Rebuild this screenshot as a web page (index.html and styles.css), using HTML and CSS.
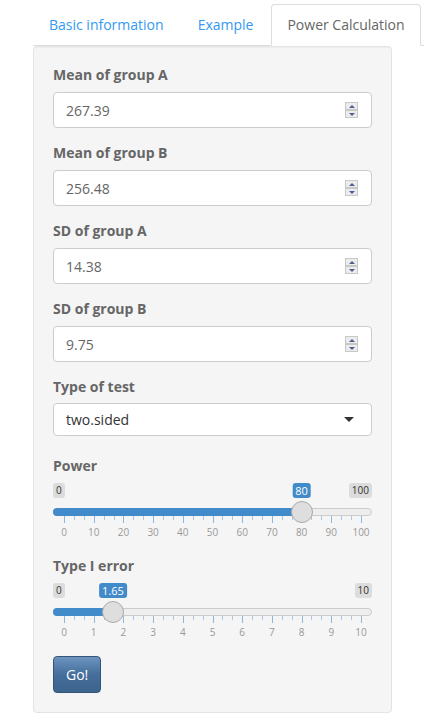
FILE: index.html
```html
<!DOCTYPE html>
<html>
<head>
<meta charset="utf-8">
<link rel="stylesheet" href="styles.css">
</head>
<body>
<div class="page">
  <ul class="tabs">
    <li class="tab"><a class="tab-link">Basic information</a></li>
    <li class="tab"><a class="tab-link">Example</a></li>
    <li class="tab active"><a class="tab-link">Power Calculation</a></li>
  </ul>
  <div class="well">
    <div class="group">
      <label class="label">Mean of group A</label>
      <div class="field"><input class="input" type="text" value="267.39"><span class="spin"><span class="spin-up"></span><span class="spin-down"></span></span></div>
    </div>
    <div class="group">
      <label class="label">Mean of group B</label>
      <div class="field"><input class="input" type="text" value="256.48"><span class="spin"><span class="spin-up"></span><span class="spin-down"></span></span></div>
    </div>
    <div class="group">
      <label class="label">SD of group A</label>
      <div class="field"><input class="input" type="text" value="14.38"><span class="spin"><span class="spin-up"></span><span class="spin-down"></span></span></div>
    </div>
    <div class="group">
      <label class="label">SD of group B</label>
      <div class="field"><input class="input" type="text" value="9.75"><span class="spin"><span class="spin-up"></span><span class="spin-down"></span></span></div>
    </div>
    <div class="group group-select">
      <label class="label">Type of test</label>
      <div class="select"><span class="select-text">two.sided</span><span class="caret"></span></div>
    </div>
    <div class="group">
      <label class="label">Power</label>
      <div class="slider">
        <span class="irs-min">0</span>
        <span class="irs-max">100</span>
        <div class="irs-line"></div>
        <div class="irs-inner">
          <div class="irs-bar" style="width: calc(80% + 11px)"></div>
          <span class="irs-single" style="left: 80%">80</span>
          <span class="irs-handle" style="left: 80%"></span>
          <div class="irs-grid">
            <span class="tick major" style="left:0%"></span><span class="tick" style="left:3.333%"></span><span class="tick" style="left:6.667%"></span>
            <span class="tick major" style="left:10%"></span><span class="tick" style="left:13.333%"></span><span class="tick" style="left:16.667%"></span>
            <span class="tick major" style="left:20%"></span><span class="tick" style="left:23.333%"></span><span class="tick" style="left:26.667%"></span>
            <span class="tick major" style="left:30%"></span><span class="tick" style="left:33.333%"></span><span class="tick" style="left:36.667%"></span>
            <span class="tick major" style="left:40%"></span><span class="tick" style="left:43.333%"></span><span class="tick" style="left:46.667%"></span>
            <span class="tick major" style="left:50%"></span><span class="tick" style="left:53.333%"></span><span class="tick" style="left:56.667%"></span>
            <span class="tick major" style="left:60%"></span><span class="tick" style="left:63.333%"></span><span class="tick" style="left:66.667%"></span>
            <span class="tick major" style="left:70%"></span><span class="tick" style="left:73.333%"></span><span class="tick" style="left:76.667%"></span>
            <span class="tick major" style="left:80%"></span><span class="tick" style="left:83.333%"></span><span class="tick" style="left:86.667%"></span>
            <span class="tick major" style="left:90%"></span><span class="tick" style="left:93.333%"></span><span class="tick" style="left:96.667%"></span>
            <span class="tick major" style="left:100%"></span>
            <span class="tick-text" style="left:0%">0</span>
            <span class="tick-text" style="left:10%">10</span>
            <span class="tick-text" style="left:20%">20</span>
            <span class="tick-text" style="left:30%">30</span>
            <span class="tick-text" style="left:40%">40</span>
            <span class="tick-text" style="left:50%">50</span>
            <span class="tick-text" style="left:60%">60</span>
            <span class="tick-text" style="left:70%">70</span>
            <span class="tick-text" style="left:80%">80</span>
            <span class="tick-text" style="left:90%">90</span>
            <span class="tick-text" style="left:100%">100</span>
          </div>
        </div>
      </div>
    </div>
    <div class="group">
      <label class="label">Type I error</label>
      <div class="slider">
        <span class="irs-min">0</span>
        <span class="irs-max">10</span>
        <div class="irs-line"></div>
        <div class="irs-inner">
          <div class="irs-bar" style="width: calc(16.5% + 11px)"></div>
          <span class="irs-single" style="left: 16.5%">1.65</span>
          <span class="irs-handle" style="left: 16.5%"></span>
          <div class="irs-grid">
            <span class="tick major" style="left:0%"></span><span class="tick" style="left:3.333%"></span><span class="tick" style="left:6.667%"></span>
            <span class="tick major" style="left:10%"></span><span class="tick" style="left:13.333%"></span><span class="tick" style="left:16.667%"></span>
            <span class="tick major" style="left:20%"></span><span class="tick" style="left:23.333%"></span><span class="tick" style="left:26.667%"></span>
            <span class="tick major" style="left:30%"></span><span class="tick" style="left:33.333%"></span><span class="tick" style="left:36.667%"></span>
            <span class="tick major" style="left:40%"></span><span class="tick" style="left:43.333%"></span><span class="tick" style="left:46.667%"></span>
            <span class="tick major" style="left:50%"></span><span class="tick" style="left:53.333%"></span><span class="tick" style="left:56.667%"></span>
            <span class="tick major" style="left:60%"></span><span class="tick" style="left:63.333%"></span><span class="tick" style="left:66.667%"></span>
            <span class="tick major" style="left:70%"></span><span class="tick" style="left:73.333%"></span><span class="tick" style="left:76.667%"></span>
            <span class="tick major" style="left:80%"></span><span class="tick" style="left:83.333%"></span><span class="tick" style="left:86.667%"></span>
            <span class="tick major" style="left:90%"></span><span class="tick" style="left:93.333%"></span><span class="tick" style="left:96.667%"></span>
            <span class="tick major" style="left:100%"></span>
            <span class="tick-text" style="left:0%">0</span>
            <span class="tick-text" style="left:10%">1</span>
            <span class="tick-text" style="left:20%">2</span>
            <span class="tick-text" style="left:30%">3</span>
            <span class="tick-text" style="left:40%">4</span>
            <span class="tick-text" style="left:50%">5</span>
            <span class="tick-text" style="left:60%">6</span>
            <span class="tick-text" style="left:70%">7</span>
            <span class="tick-text" style="left:80%">8</span>
            <span class="tick-text" style="left:90%">9</span>
            <span class="tick-text" style="left:100%">10</span>
          </div>
        </div>
      </div>
    </div>
    <button class="btn" type="button">Go!</button>
  </div>
</div>
</body>
</html>
```
FILE: styles.css
```css
* { box-sizing: border-box; }
html, body { margin: 0; padding: 0; background: #fff; }
body {
  font-family: "Open Sans", "Liberation Sans", sans-serif;
  font-size: 14px;
  line-height: 20px;
  color: #666;
}
.page { padding: 4px 0 0 33px; }
.tabs {
  list-style: none;
  margin: 0;
  padding: 0;
  display: flex;
  border-bottom: 1px solid #ddd;
}
.tab { margin-bottom: -1px; margin-right: 2px; }
.tab-link {
  display: block;
  padding: 10px 15px;
  line-height: 20px;
  border: 1px solid transparent;
  border-radius: 4px 4px 0 0;
  color: #3399f3;
}
.tab.active .tab-link {
  color: #666;
  background: #fff;
  border-color: #ddd;
  border-bottom-color: transparent;
}
.well {
  width: 359px;
  background: #f5f5f5;
  border: 1px solid #e3e3e3;
  border-radius: 4px;
  padding: 18px 19px 19px;
  box-shadow: inset 0 1px 1px rgba(0,0,0,0.03);
}
.group { margin-bottom: 15px; }
.label {
  display: block;
  font-weight: 700;
  line-height: 20px;
  margin-bottom: 7px;
  color: #666;
}
.field { position: relative; height: 36px; }
.input {
  display: block;
  width: 100%;
  height: 36px;
  padding: 6px 12px;
  font-family: inherit;
  font-size: 14px;
  color: #666;
  background: #fff;
  border: 1px solid #ccc;
  border-radius: 4px;
  outline: none;
}
.spin {
  position: absolute;
  right: 14px;
  top: 10px;
  width: 13px;
  height: 16px;
  display: flex;
  flex-direction: column;
  gap: 0;
}
.spin-up, .spin-down {
  flex: 1;
  background: #ececec;
  border: 1px solid #c8c8c8;
  display: flex;
  align-items: center;
  justify-content: center;
}
.spin-up::after {
  content: "";
  border-left: 3px solid transparent;
  border-right: 3px solid transparent;
  border-bottom: 3px solid #4f5d95;
}
.spin-down::after {
  content: "";
  border-left: 3px solid transparent;
  border-right: 3px solid transparent;
  border-top: 3px solid #4f5d95;
}
.group-select .label { margin-bottom: 6px; }
.group-select { margin-bottom: 20px; }
.select {
  height: 33px;
  background: #fff;
  border: 1px solid #ccc;
  border-radius: 4px;
  padding: 0 12px;
  display: flex;
  align-items: center;
  justify-content: space-between;
  color: #333;
}
.caret {
  width: 0;
  height: 0;
  margin-right: 5px;
  border-left: 5px solid transparent;
  border-right: 5px solid transparent;
  border-top: 5px solid #333;
}
.slider {
  position: relative;
  height: 58px;
}
.irs-min, .irs-max {
  position: absolute;
  top: 0;
  font-size: 10px;
  line-height: 13px;
  padding: 1px 3px;
  background: rgba(0,0,0,0.1);
  border-radius: 3px;
  color: #333;
}
.irs-min { left: 0; }
.irs-max { right: 0; }
.irs-line {
  position: absolute;
  top: 25px;
  left: 0;
  right: 0;
  height: 8px;
  background: #eee;
  border: 1px solid #ccc;
  border-radius: 16px;
}
.irs-inner {
  position: absolute;
  top: 0;
  bottom: 0;
  left: 11px;
  right: 11px;
}
.irs-bar {
  position: absolute;
  top: 25px;
  left: -11px;
  height: 8px;
  background: #428bca;
  border-radius: 8px 0 0 8px;
}
.irs-single {
  position: absolute;
  top: 0;
  transform: translateX(-50%);
  font-size: 11px;
  line-height: 13px;
  padding: 1px 3px;
  background: #428bca;
  color: #fff;
  border-radius: 3px;
  white-space: nowrap;
}
.irs-handle {
  position: absolute;
  top: 18px;
  width: 22px;
  height: 22px;
  margin-left: -11px;
  border: 1px solid #aaa;
  background: #dedede;
  border-radius: 50%;
  z-index: 2;
}
.irs-grid {
  position: absolute;
  top: 33px;
  left: 0;
  right: 0;
  height: 25px;
}
.tick {
  position: absolute;
  top: 0;
  width: 1px;
  height: 4px;
  background: #a9c6e3;
}
.tick.major { height: 7px; background: #8fb6dc; }
.tick-text {
  position: absolute;
  top: 10px;
  transform: translateX(-50%);
  font-size: 10px;
  line-height: 13px;
  color: #999;
  white-space: nowrap;
}
.btn {
  display: block;
  margin-top: 2px;
  height: 37px;
  padding: 8px 12px;
  font-family: inherit;
  font-size: 14px;
  line-height: 19px;
  color: #fff;
  border: 1px solid #345578;
  border-radius: 4px;
  background: linear-gradient(#6d94bf, #446e9b 50%, #3e648d);
}
```
